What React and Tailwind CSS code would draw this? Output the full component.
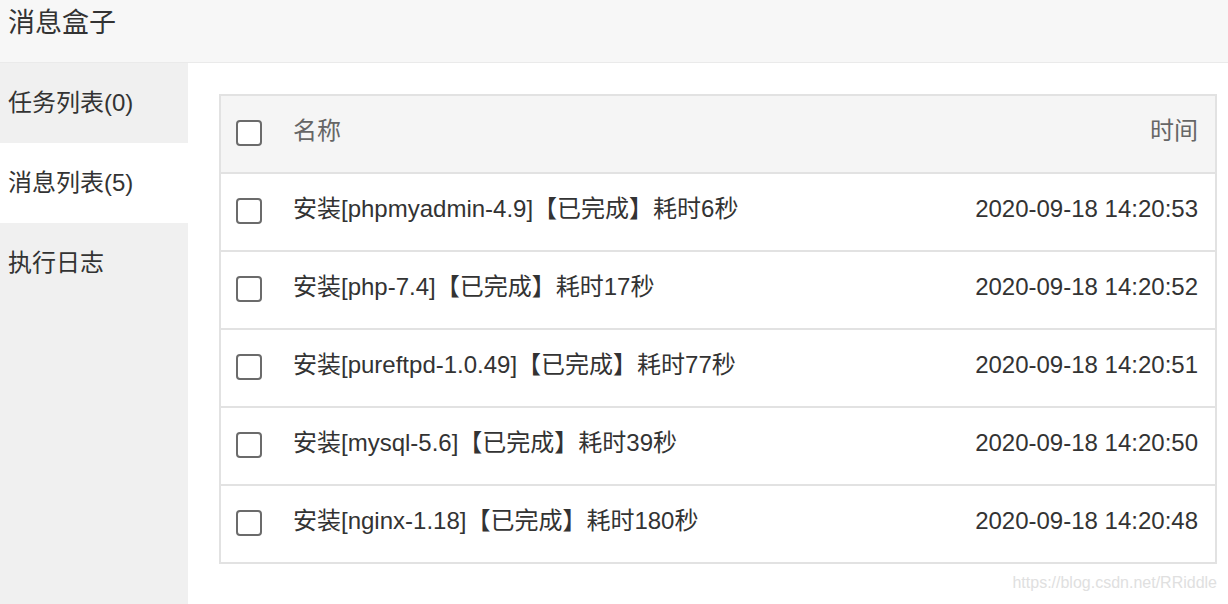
import React from 'react';

const rows = [
    { name: '安装[phpmyadmin-4.9]【已完成】耗时6秒', time: '2020-09-18 14:20:53' },
    { name: '安装[php-7.4]【已完成】耗时17秒', time: '2020-09-18 14:20:52' },
    { name: '安装[pureftpd-1.0.49]【已完成】耗时77秒', time: '2020-09-18 14:20:51' },
    { name: '安装[mysql-5.6]【已完成】耗时39秒', time: '2020-09-18 14:20:50' },
    { name: '安装[nginx-1.18]【已完成】耗时180秒', time: '2020-09-18 14:20:48' },
];

const tabs = ['任务列表(0)', '消息列表(5)', '执行日志'];

const Box = () => (
    <span className="block w-[26px] h-[26px] rounded-[4px] border-2 border-[#6b6b6b] bg-white shrink-0" />
);

export default function App() {
    return (
        <div
            className="w-[1228px] h-[604px] overflow-hidden flex flex-col bg-white text-[#333]"
            style={{ fontFamily: '"Liberation Sans", "Noto Sans CJK SC", sans-serif' }}
        >
            {/* title bar */}
            <div className="h-[63px] shrink-0 bg-[#f7f7f7] border-b border-[#eaeaea] flex items-start pl-2 pt-[5px]">
                <span className="text-[27px] leading-[36px]">消息盒子</span>
            </div>

            <div className="flex flex-1 min-h-0">
                {/* sidebar */}
                <div className="w-[188px] shrink-0 bg-[#f0f0f0]">
                    {tabs.map((t, i) => (
                        <div
                            key={t}
                            className={`h-[80px] flex items-center pl-2 text-[24px] ${i === 1 ? 'bg-white' : ''}`}
                        >
                            {t}
                        </div>
                    ))}
                </div>

                {/* content */}
                <div className="flex-1 relative pl-[31px] pt-[31px] pr-[11px]">
                    <div className="border-2 border-[#e2e2e2] w-[998px]">
                        <div className="h-[76px] bg-[#f5f5f5] flex items-center pl-[15px] pr-[17px] pb-[3px] text-[#666] text-[24px]">
                            <Box />
                            <span className="ml-[31px] flex-1 mb-[3px]">名称</span>
                            <span className="mb-[3px]">时间</span>
                        </div>
                        {rows.map((r) => (
                            <div
                                key={r.time}
                                className="h-[78px] border-t-2 border-[#e2e2e2] flex items-center pl-[15px] pr-[17px] pb-[3px] text-[24px]"
                            >
                                <Box />
                                <span className="ml-[31px] flex-1 whitespace-nowrap mb-[3px]">{r.name}</span>
                                <span className="whitespace-nowrap mb-[3px]">{r.time}</span>
                            </div>
                        ))}
                    </div>
                    <div className="absolute right-[11px] bottom-[9px] text-[16px] text-[#e0e0e0]">
                        https://blog.csdn.net/RRiddle
                    </div>
                </div>
            </div>
        </div>
    );
}
